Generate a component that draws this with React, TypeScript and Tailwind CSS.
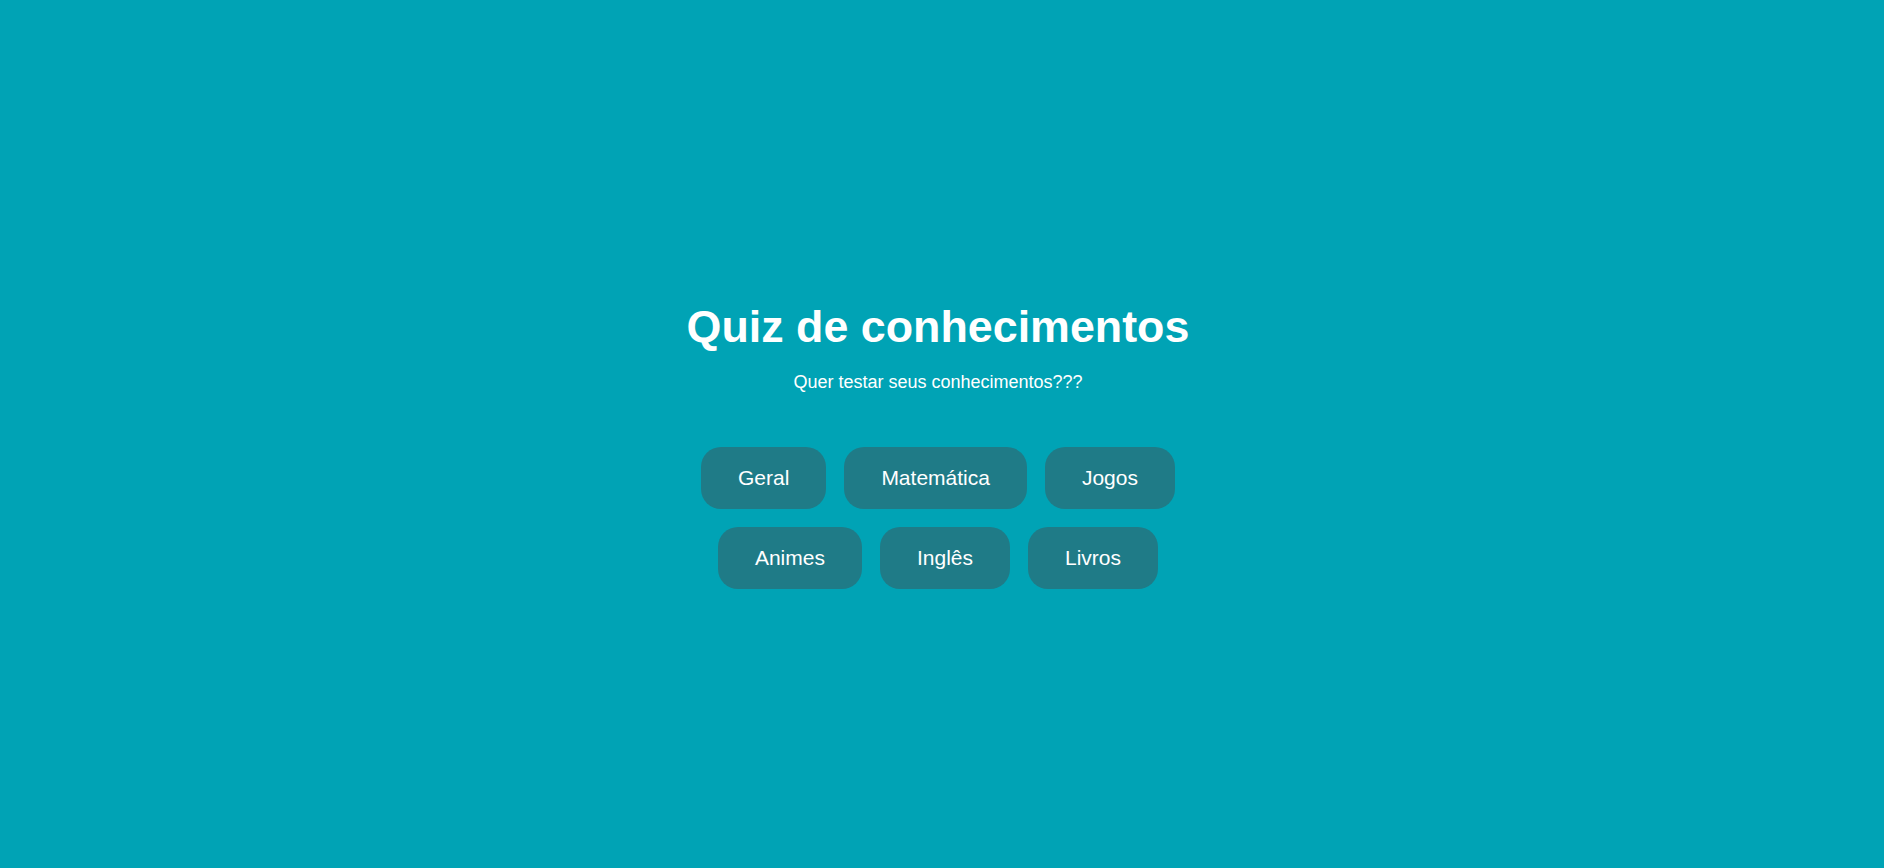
const CATEGORIES = ['Geral', 'Matemática', 'Jogos', 'Animes', 'Inglês', 'Livros'];

export default function App() {
  return (
    <div className="min-h-screen w-full bg-[#00a3b5] flex items-center justify-center pt-[22px] pr-[8px] font-['Liberation_Sans',Arial,sans-serif] text-white">
      <div className="flex flex-col items-center">
        <h1 className="text-[2.8rem] leading-[1.15] font-bold">Quiz de conhecimentos</h1>
        <p className="mt-[20px] text-[18px] leading-[1.15]">Quer testar seus conhecimentos???</p>

        {/* categorias */}
        <div className="mt-[54px] w-[520px] flex flex-wrap justify-center gap-x-[18px] gap-y-[18px]">
          {CATEGORIES.map((cat) => (
            <button
              key={cat}
              className="bg-[#1f7b87] rounded-[20px] px-[37px] py-[19px] text-[21px] leading-[1.15] text-white cursor-pointer"
            >
              {cat}
            </button>
          ))}
        </div>
      </div>
    </div>
  );
}
